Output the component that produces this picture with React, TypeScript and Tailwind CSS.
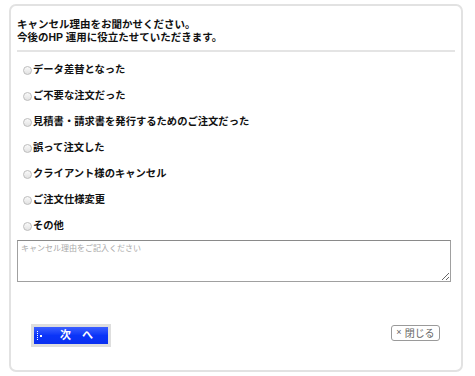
const reasons = [
  "データ差替となった",
  "ご不要な注文だった",
  "見積書・請求書を発行するためのご注文だった",
  "誤って注文した",
  "クライアント様のキャンセル",
  "ご注文仕様変更",
  "その他",
];

const font = "font-['Liberation_Sans','Noto_Sans_CJK_JP',sans-serif]";

function Radio() {
  return (
    <span className="inline-block w-[9px] h-[9px] rounded-full border border-[#bdbdbd] bg-gradient-to-b from-[#fafafa] to-[#e2e2e2] shrink-0" />
  );
}

export default function App() {
  return (
    <div className={`w-[475px] h-[376px] bg-white pt-[4px] pl-[9px] ${font}`}>
      <div className="w-[454px] h-[368px] border-2 border-[#e2e2e2] rounded-[7px] px-[6px] pt-[12px] flex flex-col">
        {/* header */}
        <div className="text-[10.5px] leading-[13px] font-bold text-[#111]">
          <p>キャンセル理由をお聞かせください。</p>
          <p>今後のHP 運用に役立たせていただきます。</p>
        </div>
        <div className="mt-[6px] h-[2px] bg-[#e4e4e4]" />

        {/* reasons */}
        <div className="mt-[5px] flex flex-col">
          {reasons.map((r) => (
            <label key={r} className="h-[26px] flex items-center pl-[6px] text-[10.3px] font-bold text-[#111]">
              <Radio />
              <span className="ml-[1px]">{r}</span>
            </label>
          ))}
        </div>

        <textarea
          className="mt-[1px] h-[42px] w-[434px] border border-[#a0a0a0] border-t-[#8a8a8a] px-[3px] py-[2px] text-[8px] leading-[11px] resize-y outline-none placeholder:text-[#aaa]"
          placeholder="キャンセル理由をご記入ください"
        />

        {/* buttons */}
        <div className="mt-[42px] flex items-start justify-between pl-[14px] pr-[15px]">
          <button className="w-[80px] h-[23px] border-[3px] border-[#dedede] bg-gradient-to-b from-[#3a5dff] via-[#0a34f8] to-[#0a30f0] flex items-center text-white text-[11px] font-bold">
            <span className="ml-[3px] flex flex-col gap-[1px]">
              <span className="w-[1px] h-[1px] bg-white" />
              <span className="w-[1px] h-[1px] bg-white" />
              <span className="w-[1px] h-[1px] bg-white" />
              <span className="w-[1px] h-[1px] bg-white" />
              <span className="w-[1px] h-[1px] bg-white" />
            </span>
            <span className="ml-[2px] w-[2px] h-[2px] bg-white" />
            <span className="ml-[18px]">次</span>
            <span className="ml-[11px]">へ</span>
          </button>
          <button className="mt-[1px] w-[49px] h-[16px] border border-[#9a9a9a] rounded-[3px] bg-white flex items-center justify-center text-[10px] text-[#666]">
            <span className="text-[9px] mr-[3px]">×</span>閉じる
          </button>
        </div>
      </div>
    </div>
  );
}
